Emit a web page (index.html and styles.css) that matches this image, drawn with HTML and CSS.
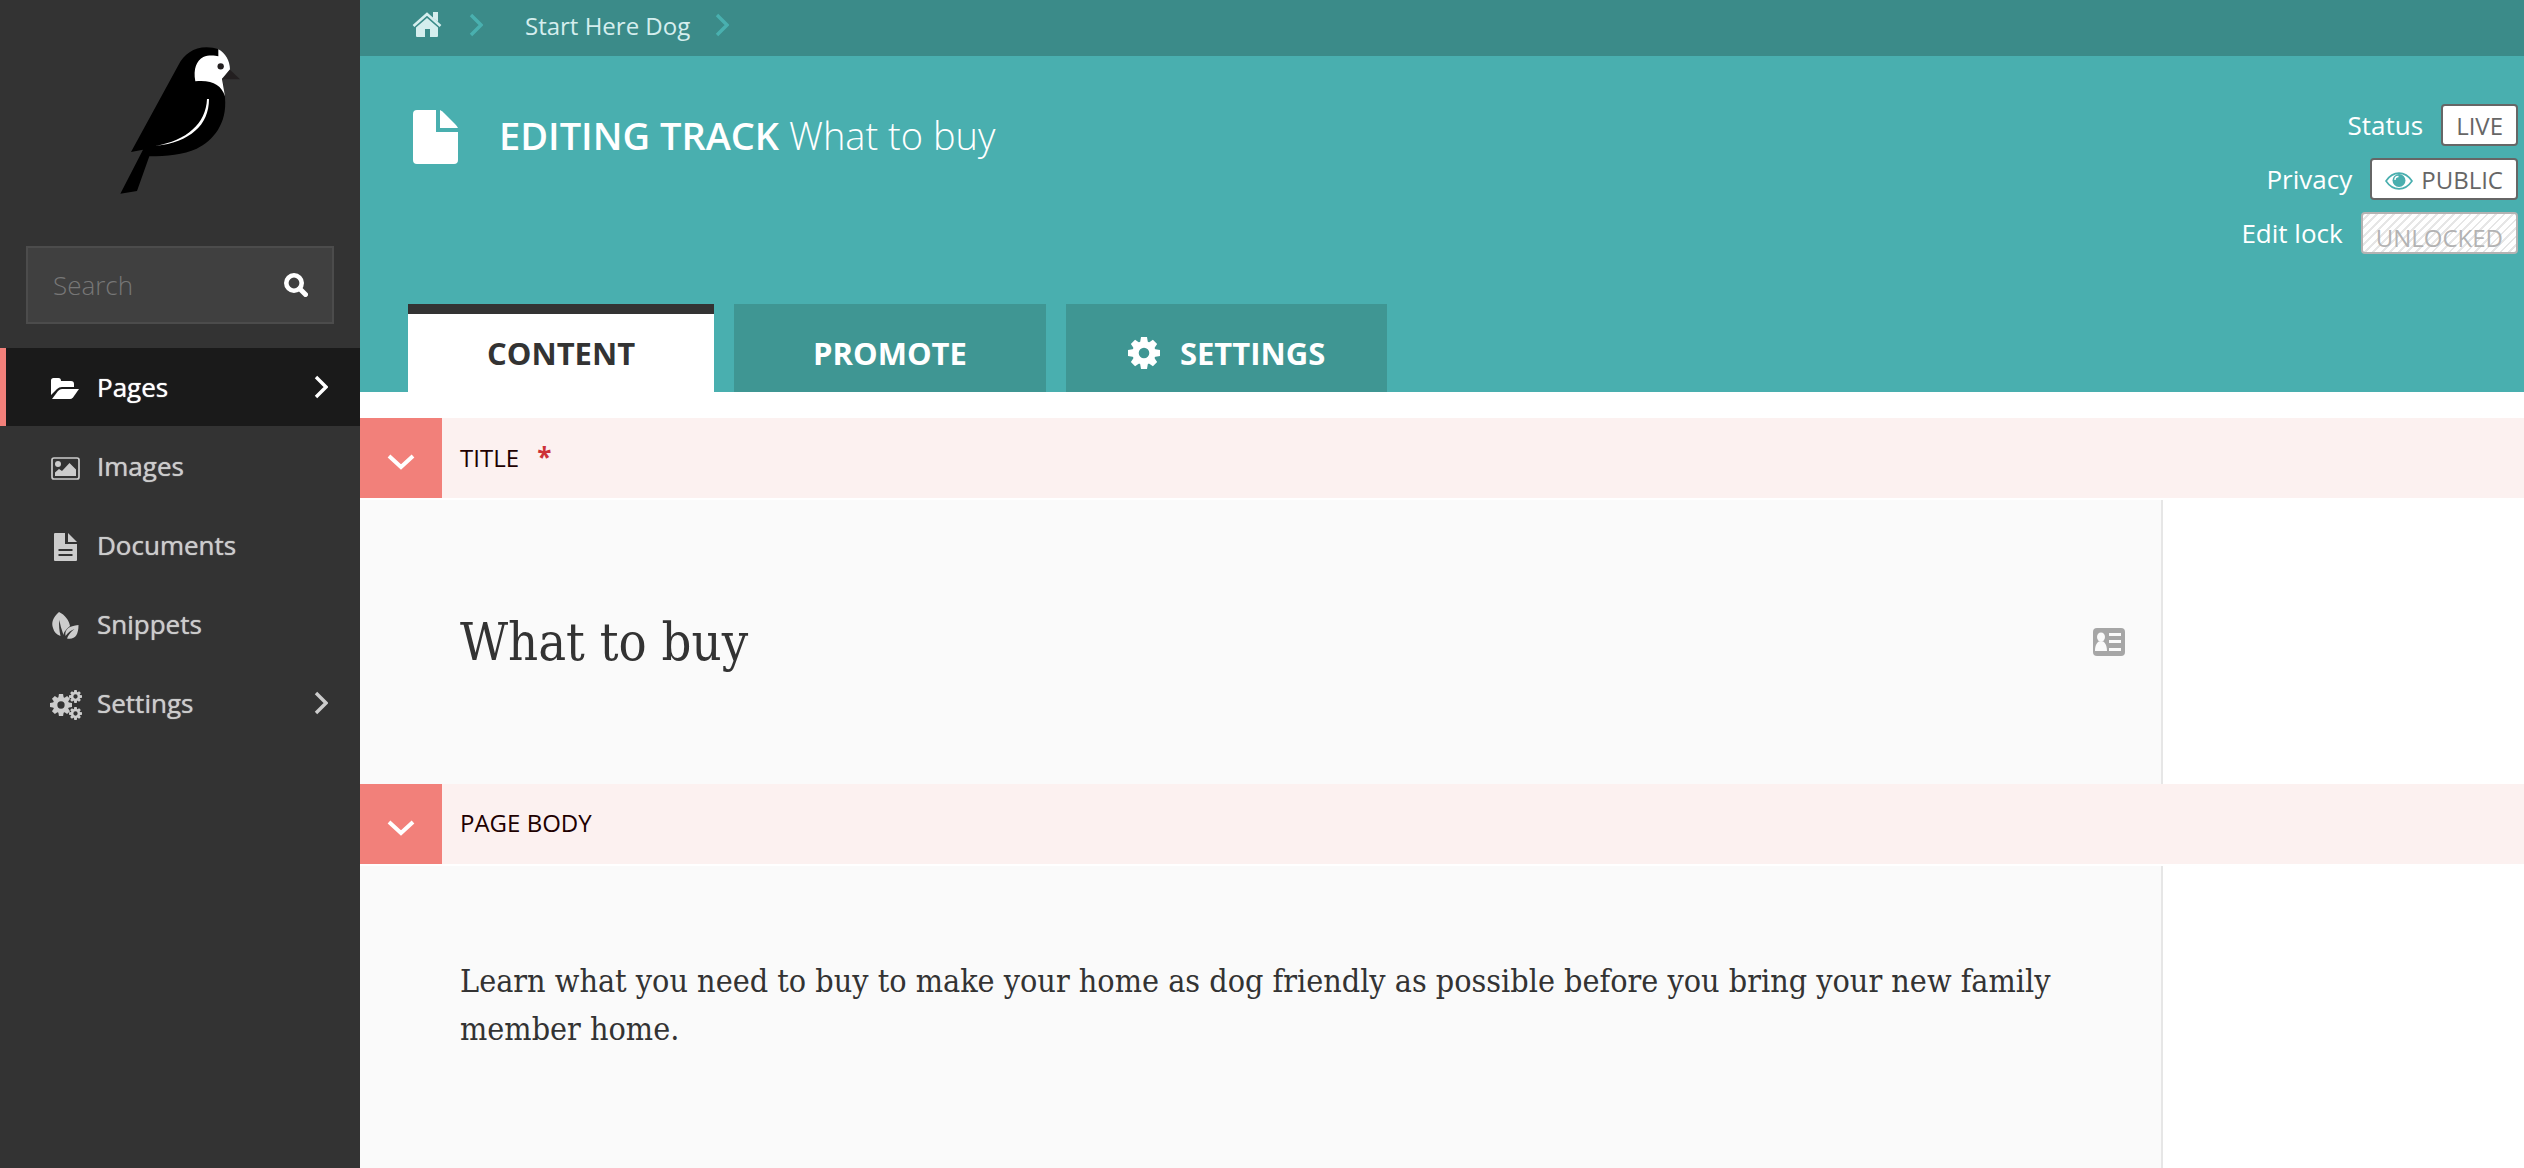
FILE: index.html
```html
<!DOCTYPE html>
<html lang="en">
<head>
<meta charset="utf-8">
<title>Editing Track What to buy</title>
<link rel="stylesheet" href="styles.css">
</head>
<body>
<svg class="sprite" aria-hidden="true">
  <symbol id="gear" viewBox="-16 -16 32 32">
    <circle r="8.5" fill="none" stroke="currentColor" stroke-width="6.4"/>
    <g fill="currentColor">
      <path d="M-4-10l1-6h6l1 6zM-4 10l1 6h6l1-6zM-10-4l-6 1v6l6 1zM10-4l6 1v6l-6 1z"/>
      <path transform="rotate(45)" d="M-4-10l1-5.6h6l1 5.6zM-4 10l1 5.6h6l1-5.6zM-10-4l-5.6 1v6l5.6 1zM10-4l5.6 1v6l-5.6 1z"/>
    </g>
  </symbol>
  <symbol id="chevron" viewBox="0 0 14 24">
    <path d="M2 2l10 10L2 22" fill="none" stroke="currentColor" stroke-width="3.4"/>
  </symbol>
  <symbol id="chevron-down" viewBox="0 0 28 18">
    <path d="M2 3l12 11L26 3" fill="none" stroke="currentColor" stroke-width="4"/>
  </symbol>
</svg>
<div class="layout">
  <aside class="sidebar">
    <a class="logo" href="#" aria-label="Dashboard">
      <svg viewBox="360 140 360 441" width="120" height="147">
        <path d="M393 455L535 195C552 162 580 141 620 141C632 141 646 143 656 147L668 240L675 292C682 370 640 420 590 445C550 463 500 468 448 468L411 572L361 580L429 448Z" fill="#000"/>
        <path d="M586 243C579 205 590 181 610 170C625 163 645 165 655 168V147C676 158 690 182 690 207L666 235L675 288C664 254 637 238 586 243Z" fill="#fff"/>
        <path d="M690 208L720 237H667Z" fill="#231f20"/>
        <circle cx="662" cy="198" r="9.500" fill="#231f20"/>
        <path d="M621 296h6C627 375 570 425 467 437C560 420 618 370 621 296Z" fill="#fff"/>
      </svg>
    </a>
    <form class="search">
      <input type="search" placeholder="Search" aria-label="Search">
      <button type="submit" aria-label="Search">
        <svg viewBox="0 0 24 24" width="24" height="24"><circle cx="10" cy="10" r="7.700" fill="none" stroke="currentColor" stroke-width="4.600"/><path d="M16 16l5.500 5.500" stroke="currentColor" stroke-width="5" stroke-linecap="round"/></svg>
      </button>
    </form>
    <nav class="menu">
      <a class="menu-item active" href="#">
        <svg class="menu-icon" viewBox="0 0 32 28"><path d="M1 20V5.500Q1 3 3.500 3H8.500Q11 3 11 6H21Q24 6 24 9V12H12Q9 12 7 14Z" fill="currentColor"/><path d="M2 24L8 16Q10 14 12 14H29L23 22.500Q21.500 24 20 24Z" fill="currentColor"/></svg>
        <span>Pages</span>
        <svg class="menu-arrow"><use href="#chevron"/></svg>
      </a>
      <a class="menu-item" href="#">
        <svg class="menu-icon" viewBox="0 0 32 28"><rect x="2" y="4" width="27" height="21" rx="2" fill="none" stroke="currentColor" stroke-width="1.700"/><circle cx="8" cy="10" r="3" fill="currentColor"/><path d="M5 22V18.500L9 15L12 17L19.500 9L26 15.500V22Z" fill="currentColor"/></svg>
        <span>Images</span>
      </a>
      <a class="menu-item" href="#">
        <svg class="menu-icon" viewBox="0 0 32 28"><path d="M5 0H15V11H27V27Q27 28 26 28H5Q4 28 4 27V1Q4 0 5 0ZM8.500 16v2h14v-2ZM8.500 21v2h14v-2Z" fill="currentColor" fill-rule="evenodd"/><path d="M18 0L27 9H18Z" fill="currentColor"/></svg>
        <span>Documents</span>
      </a>
      <a class="menu-item" href="#">
        <svg class="menu-icon" viewBox="0 0 32 28"><path d="M9 0C3 5 1 11 3 16Q4.500 22 10.500 24Q8.500 15 9.300 8Q10.500 15 13.500 23C14 19 17 17 20 14C19 8 15 3 9 0Z" fill="currentColor"/><path d="M28.500 13C19 14 14.500 17 15.500 24Q19 19 24.500 17Q19 21 17 26.500C25 28 28.500 23 28.500 13Z" fill="currentColor"/></svg>
        <span>Snippets</span>
      </a>
      <a class="menu-item" href="#">
        <svg class="menu-icon wide" viewBox="0 0 32 30"><use href="#gear" x="0" y="4" width="22" height="22"/><use href="#gear" x="19" y="0" width="13" height="13"/><use href="#gear" x="19" y="17" width="13" height="13"/></svg>
        <span>Settings</span>
        <svg class="menu-arrow"><use href="#chevron"/></svg>
      </a>
    </nav>
  </aside>

  <main class="content">
    <nav class="breadcrumb" aria-label="Breadcrumb">
      <a class="home" href="#" aria-label="Home"><svg viewBox="0 0 30 26" width="30" height="26"><path d="M1.500 14L15 2L28.500 14" fill="none" stroke="currentColor" stroke-width="2.600"/><path d="M21 0h5v10l-5-4Z" fill="currentColor"/><path d="M4 15.500L15 6L26 15.500V24Q26 25 25 25H18V17H13V25H5Q4 25 4 24Z" fill="currentColor"/></svg></a>
      <svg class="crumb-arrow"><use href="#chevron"/></svg>
      <a class="crumb" href="#">Start Here Dog</a>
      <svg class="crumb-arrow"><use href="#chevron"/></svg>
    </nav>

    <header class="page-header">
      <div class="header-row">
        <svg class="page-icon" viewBox="0 0 46 54" width="46" height="54"><path d="M4 0H23V22H45V50Q45 54 41 54H4Q0 54 0 50V4Q0 0 4 0Z" fill="currentColor"/><path d="M27 0Q29 1 31 3L42 14Q44 16 45 18H27Z" fill="currentColor"/></svg>
        <h1>EDITING TRACK <span>What to buy</span></h1>
        <dl class="meta">
          <div><dt>Status</dt><dd><a class="badge" href="#">LIVE</a></dd></div>
          <div><dt>Privacy</dt><dd><button class="badge" type="button"><svg viewBox="0 0 28 18" width="28" height="18"><path d="M1 9C8-1.500 20-1.500 27 9C20 19.500 8 19.500 1 9Z" fill="none" stroke="currentColor" stroke-width="1.600"/><circle cx="14" cy="8.500" r="6.500" fill="currentColor"/><path d="M10 8Q10 4.500 13.500 4.500" stroke="#fff" stroke-width="1.400" fill="none"/></svg>PUBLIC</button></dd></div>
          <div><dt>Edit lock</dt><dd><button class="badge locked" type="button" disabled>UNLOCKED</button></dd></div>
        </dl>
      </div>
      <div class="tabs" role="tablist">
        <button class="tab selected" role="tab" aria-selected="true" type="button">CONTENT</button>
        <button class="tab" role="tab" type="button">PROMOTE</button>
        <button class="tab with-icon" role="tab" type="button"><svg class="tab-icon"><use href="#gear"/></svg>SETTINGS</button>
      </div>
    </header>

    <form class="editor">
      <section class="field">
        <div class="field-head">
          <button class="toggle" type="button" aria-label="Collapse title"><svg width="28" height="18"><use href="#chevron-down"/></svg></button>
          <label for="title">TITLE <b>*</b></label>
        </div>
        <div class="field-body">
          <div class="panel title-panel">
            <input id="title" type="text" value="What to buy">
            <svg viewBox="0 0 32 28" width="32" height="28"><path d="M4 0H28Q32 0 32 4V24Q32 28 28 28H4Q0 28 0 24V4Q0 0 4 0Z" fill="#a6a6a6"/><ellipse cx="8" cy="9" rx="4" ry="4.500" fill="#fafafa"/><path d="M2 23C2 16 5 13 8 13S14 16 14 23ZM16 5h12v3H16ZM16 12h12v3H16ZM16 20h12v3H16Z" fill="#fafafa"/></svg>
          </div>
        </div>
      </section>
      <section class="field grow">
        <div class="field-head">
          <button class="toggle" type="button" aria-label="Collapse page body"><svg width="28" height="18"><use href="#chevron-down"/></svg></button>
          <label for="body">PAGE BODY</label>
        </div>
        <div class="field-body">
          <div class="panel body-panel">
            <textarea id="body" rows="2">Learn what you need to buy to make your home as dog friendly as possible before you bring your new family member home.</textarea>
          </div>
        </div>
      </section>
    </form>
  </main>
</div>
</body>
</html>
```
FILE: styles.css
```css
* { box-sizing: border-box; }

body {
  margin: 0;
  font-family: "Open Sans", "Noto Sans", sans-serif;
  font-size: 26px;
  color: #333;
  background: #fff;
}

a { color: inherit; text-decoration: none; }
button, input, textarea { font: inherit; color: inherit; border: 0; padding: 0; background: none; border-radius: 0; }
input, textarea { outline: none; min-width: 0; }
button { cursor: pointer; }
svg { display: block; flex: none; }
.sprite { position: absolute; width: 0; height: 0; }

.layout { display: flex; min-height: 100vh; }

/* Sidebar */
.sidebar { flex: none; width: 360px; background: #333; color: #ccc; }
.logo { display: flex; justify-content: center; padding: 47px 0 52px; }

.search {
  display: flex;
  align-items: center;
  height: 78px;
  margin: 0 26px 24px;
  padding: 0 24px 0 25px;
  border: 2px solid #4c4c4c;
  background: #404040;
}
.search input { flex: 1; font-weight: 300; appearance: none; }
.search input::placeholder { color: #777; opacity: 1; }
.search button { color: #fff; }

.menu { display: flex; flex-direction: column; gap: 1px; }
.menu-item {
  display: flex;
  align-items: center;
  gap: 15px;
  height: 78px;
  padding: 0 32px 0 44px;
  border-left: 6px solid transparent;
  text-shadow: 0 0 1px currentColor;
}
.menu-item span { flex: 1; }
.menu-item.active { background: #1a1a1a; border-color: #f2807a; color: #fff; }
.menu-icon { width: 32px; height: 28px; margin-top: 4px; }
.menu-icon.wide { height: 30px; }
.menu-arrow { width: 14px; height: 24px; }

/* Breadcrumb */
.content { flex: 1; min-width: 0; display: flex; flex-direction: column; }
.breadcrumb {
  display: flex;
  align-items: center;
  height: 56px;
  padding: 0 52px 6px;
  background: #3b8b89;
  color: #d5eeee;
  font-size: 24px;
}
.crumb-arrow { width: 14px; height: 24px; margin: 0 42px 0 27px; color: #49b0af; }
.crumb + .crumb-arrow { margin-left: 25px; }

/* Header */
.page-header {
  display: flex;
  flex-direction: column;
  justify-content: space-between;
  height: 336px;
  background: #49afaf;
  color: #fff;
}
.header-row { display: flex; align-items: flex-start; padding: 48px 6px 0 53px; }
.page-icon { margin-top: 6px; }
h1 { flex: 1; margin: 4px 0 0 40px; font-size: 38px; line-height: 54px; font-weight: 600; }
h1 span { font-weight: 300; }

.meta { display: flex; flex-direction: column; gap: 12px; margin: 0; }
.meta div { display: flex; justify-content: flex-end; align-items: center; gap: 18px; height: 42px; }
.meta dd { margin: 0; }
.badge {
  display: flex;
  align-items: center;
  gap: 8px;
  height: 42px;
  padding: 0 13px;
  border: 2px solid #666;
  border-radius: 4px;
  background: #fff;
  color: #666;
  font-size: 24px;
}
.badge svg { color: #49afaf; margin-top: 4px; }
.badge.locked {
  padding-top: 8px;
  border-color: #b3b3b3;
  color: #b3b3b3;
  background: repeating-linear-gradient(-45deg, #fff 0 4px, #e6e6e6 4px 6px);
}

.tabs { display: flex; gap: 20px; padding-left: 48px; }
.tab {
  display: flex;
  align-items: center;
  height: 88px;
  padding: 20px 79px 10px;
  background: #3f9693;
  font-size: 31px;
  font-weight: 700;
}
.tab.selected { background: #fff; color: #333; border-top: 10px solid #333; padding-top: 10px; }
.tab-icon { width: 32px; height: 32px; }
.with-icon { gap: 20px; padding: 20px 62px 10px; }

/* Editor */
.editor { flex: 1; display: flex; flex-direction: column; padding-top: 26px; }
.field { display: flex; flex-direction: column; }
.grow, .grow .field-body { flex: 1; }
.field-head { display: flex; height: 80px; background: #fcf1f0; margin-bottom: 2px; }
.toggle { display: flex; align-items: center; justify-content: center; width: 82px; padding-top: 8px; background: #f2807a; color: #fff; }
.field-head label { padding: 20px 18px; color: #200000; line-height: 38px; font-size: 24px; }
.field-head b { margin-left: 12px; color: #cd3238; font-size: 26px; }
.field-body { display: grid; grid-template-columns: 5fr 1fr; }
.panel { background: #fafafa; border-right: 2px solid #e6e6e6; }
.panel input, .panel textarea { font-family: "Roboto Slab", "DejaVu Serif Condensed", "DejaVu Serif", serif; }
.title-panel { display: flex; align-items: center; height: 284px; padding: 0 36px 0 100px; }
.title-panel input { flex: 1; font-size: 52px; }
.body-panel { padding: 91px 100px; }
.body-panel textarea { display: block; width: 100%; font-size: 32px; line-height: 48px; resize: none; overflow: hidden; }
```
